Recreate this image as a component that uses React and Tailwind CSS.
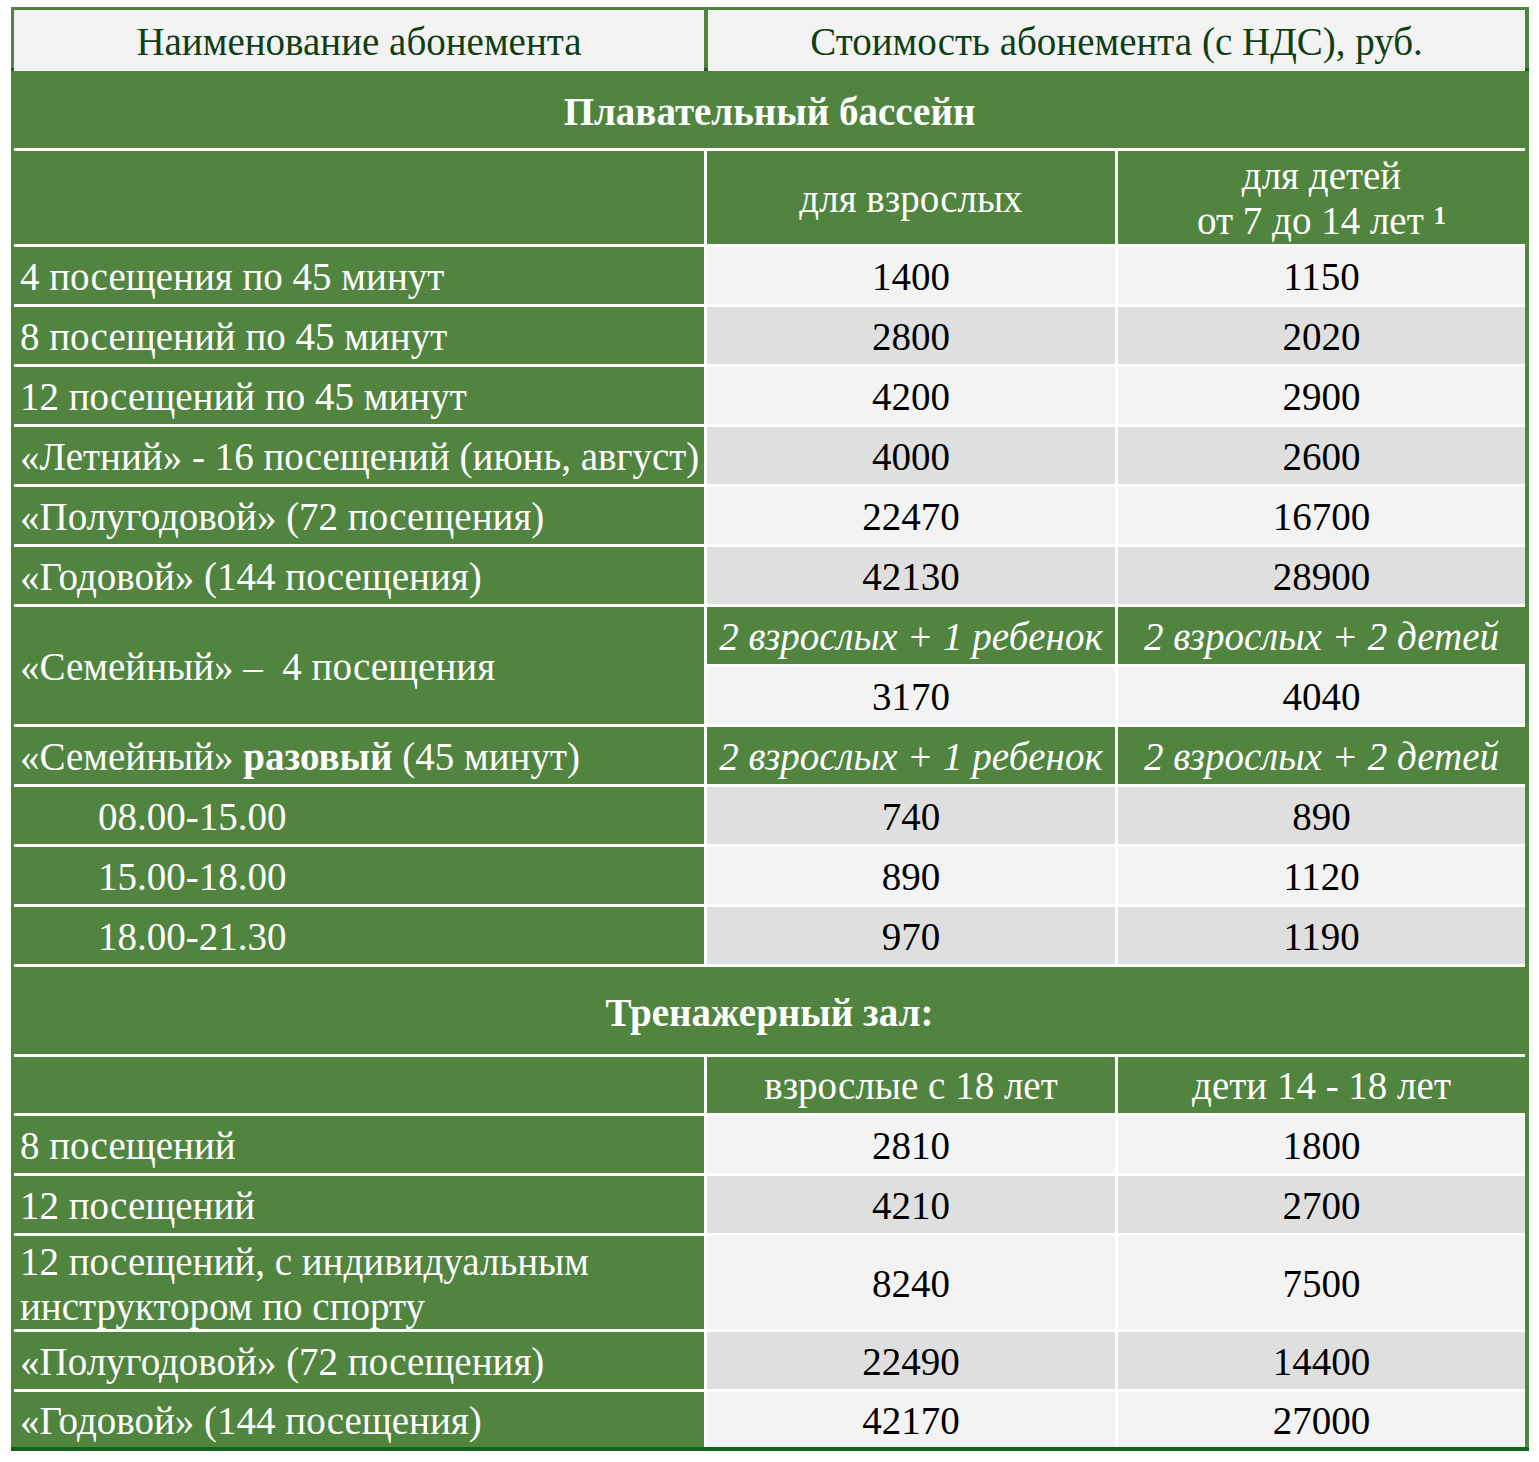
const GREEN = 'bg-[#50843f]'
const LIGHT = 'bg-[#f4f3f4]'
const GRAY = 'bg-[#dfdfdf]'

const pool = [
  { name: '4 посещения по 45 минут', a: '1400', b: '1150', bg: LIGHT },
  { name: '8 посещений по 45 минут', a: '2800', b: '2020', bg: GRAY },
  { name: '12 посещений по 45 минут', a: '4200', b: '2900', bg: LIGHT },
  { name: '«Летний» - 16 посещений (июнь, август)', a: '4000', b: '2600', bg: GRAY },
  { name: '«Полугодовой» (72 посещения)', a: '22470', b: '16700', bg: LIGHT },
  { name: '«Годовой» (144 посещения)', a: '42130', b: '28900', bg: GRAY },
]

const single = [
  { name: '08.00-15.00', a: '740', b: '890', bg: GRAY },
  { name: '15.00-18.00', a: '890', b: '1120', bg: LIGHT },
  { name: '18.00-21.30', a: '970', b: '1190', bg: GRAY },
]

const gym = [
  { name: '8 посещений', a: '2810', b: '1800', bg: LIGHT, h: 'h-[57px]' },
  { name: '12 посещений', a: '4210', b: '2700', bg: GRAY, h: 'h-[57px]' },
  { name: null, a: '8240', b: '7500', bg: LIGHT, h: 'h-[93px]', two: true },
  { name: '«Полугодовой» (72 посещения)', a: '22490', b: '14400', bg: GRAY, h: 'h-[57px]' },
  { name: '«Годовой» (144 посещения)', a: '42170', b: '27000', bg: LIGHT, h: 'h-[55px]' },
]

function NameCell({ children, className = '' }) {
  return (
    <div className={`${GREEN} flex items-center pl-[6px] pt-[3px] text-white leading-[1.16] ${className}`}>
      {children}
    </div>
  )
}

function PriceCell({ children, bg, className = '' }) {
  return <div className={`${bg} flex items-center justify-center pt-[3px] text-black ${className}`}>{children}</div>
}

function SubCell({ children, italic, className = '' }) {
  return (
    <div
      className={`${GREEN} flex items-center justify-center pt-[3px] text-white leading-[1.15] text-center ${italic ? 'italic' : ''} ${className}`}
    >
      {children}
    </div>
  )
}

function Section({ title, h }) {
  return (
    <div className={`${GREEN} col-span-3 ${h} flex items-center justify-center pt-[6px] text-white font-bold`}>{title}</div>
  )
}

function Row({ name, a, b, bg, indent, h = 'h-[57px]' }) {
  return (
    <>
      <NameCell className={`${h} ${indent ? 'pl-[84px]' : ''}`}>{name}</NameCell>
      <PriceCell bg={bg} className={h}>{a}</PriceCell>
      <PriceCell bg={bg} className={h}>{b}</PriceCell>
    </>
  )
}

export default function App() {
  return (
    <div className="bg-white w-[1539px] h-[1462px] pt-[7px] pl-[11px] text-[39px] font-['Liberation_Serif','Times_New_Roman',serif]">
      <div className="w-[1518px]">
        <div className={`${GREEN} pt-[3px] pl-[3px] pr-[4px]`}>
          <div className="grid grid-cols-[690px_1fr] gap-x-[4px] h-[58px] text-[#0d3f12]">
            <div className={`${LIGHT} flex items-center justify-center pt-[3px]`}>Наименование абонемента</div>
            <div className={`${LIGHT} flex items-center justify-center pt-[3px]`}>Стоимость абонемента (с НДС), руб.</div>
          </div>
        </div>
        <div className="h-[3px] bg-[#13631a]" />
        <div className={`${GREEN} pl-[3px] pr-[4px]`}>
          <div className="grid grid-cols-[690px_408px_407px] gap-[3px] bg-white">
            <Section title="Плавательный бассейн" h="h-[77px]" />

            <div className={`${GREEN} h-[93px]`} />
            <SubCell>для взрослых</SubCell>
            <SubCell>
              <span>
                для детей
                <br />
                от 7 до 14 лет <sup className="text-[25px] font-bold relative -top-[10px]">1</sup>
              </span>
            </SubCell>

            {pool.map((r) => (
              <Row key={r.name} {...r} />
            ))}

            <NameCell className="row-span-2">«Семейный» –&nbsp; 4 посещения</NameCell>
            <SubCell italic className="h-[57px]">2 взрослых + 1 ребенок</SubCell>
            <SubCell italic className="h-[57px]">2 взрослых + 2 детей</SubCell>
            <PriceCell bg={LIGHT} className="h-[57px]">3170</PriceCell>
            <PriceCell bg={LIGHT} className="h-[57px]">4040</PriceCell>

            <NameCell className="h-[57px]">
              <span>
                «Семейный» <b>разовый</b> (45 минут)
              </span>
            </NameCell>
            <SubCell italic className="h-[57px]">2 взрослых + 1 ребенок</SubCell>
            <SubCell italic className="h-[57px]">2 взрослых + 2 детей</SubCell>

            {single.map((r) => (
              <Row key={r.name} {...r} indent />
            ))}

            <Section title="Тренажерный зал:" h="h-[87px]" />

            <div className={`${GREEN} h-[56px]`} />
            <SubCell className="h-[56px]">взрослые с 18 лет</SubCell>
            <SubCell className="h-[56px]">дети 14 - 18 лет</SubCell>

            {gym.map((r, i) => (
              <Row
                key={i}
                h={r.h}
                bg={r.bg}
                a={r.a}
                b={r.b}
                name={
                  r.two ? (
                    <span>
                      12 посещений, с индивидуальным
                      <br />
                      инструктором по спорту
                    </span>
                  ) : (
                    r.name
                  )
                }
              />
            ))}
          </div>
        </div>
        <div className="h-[4px] bg-[#13631a]" />
      </div>
    </div>
  )
}
